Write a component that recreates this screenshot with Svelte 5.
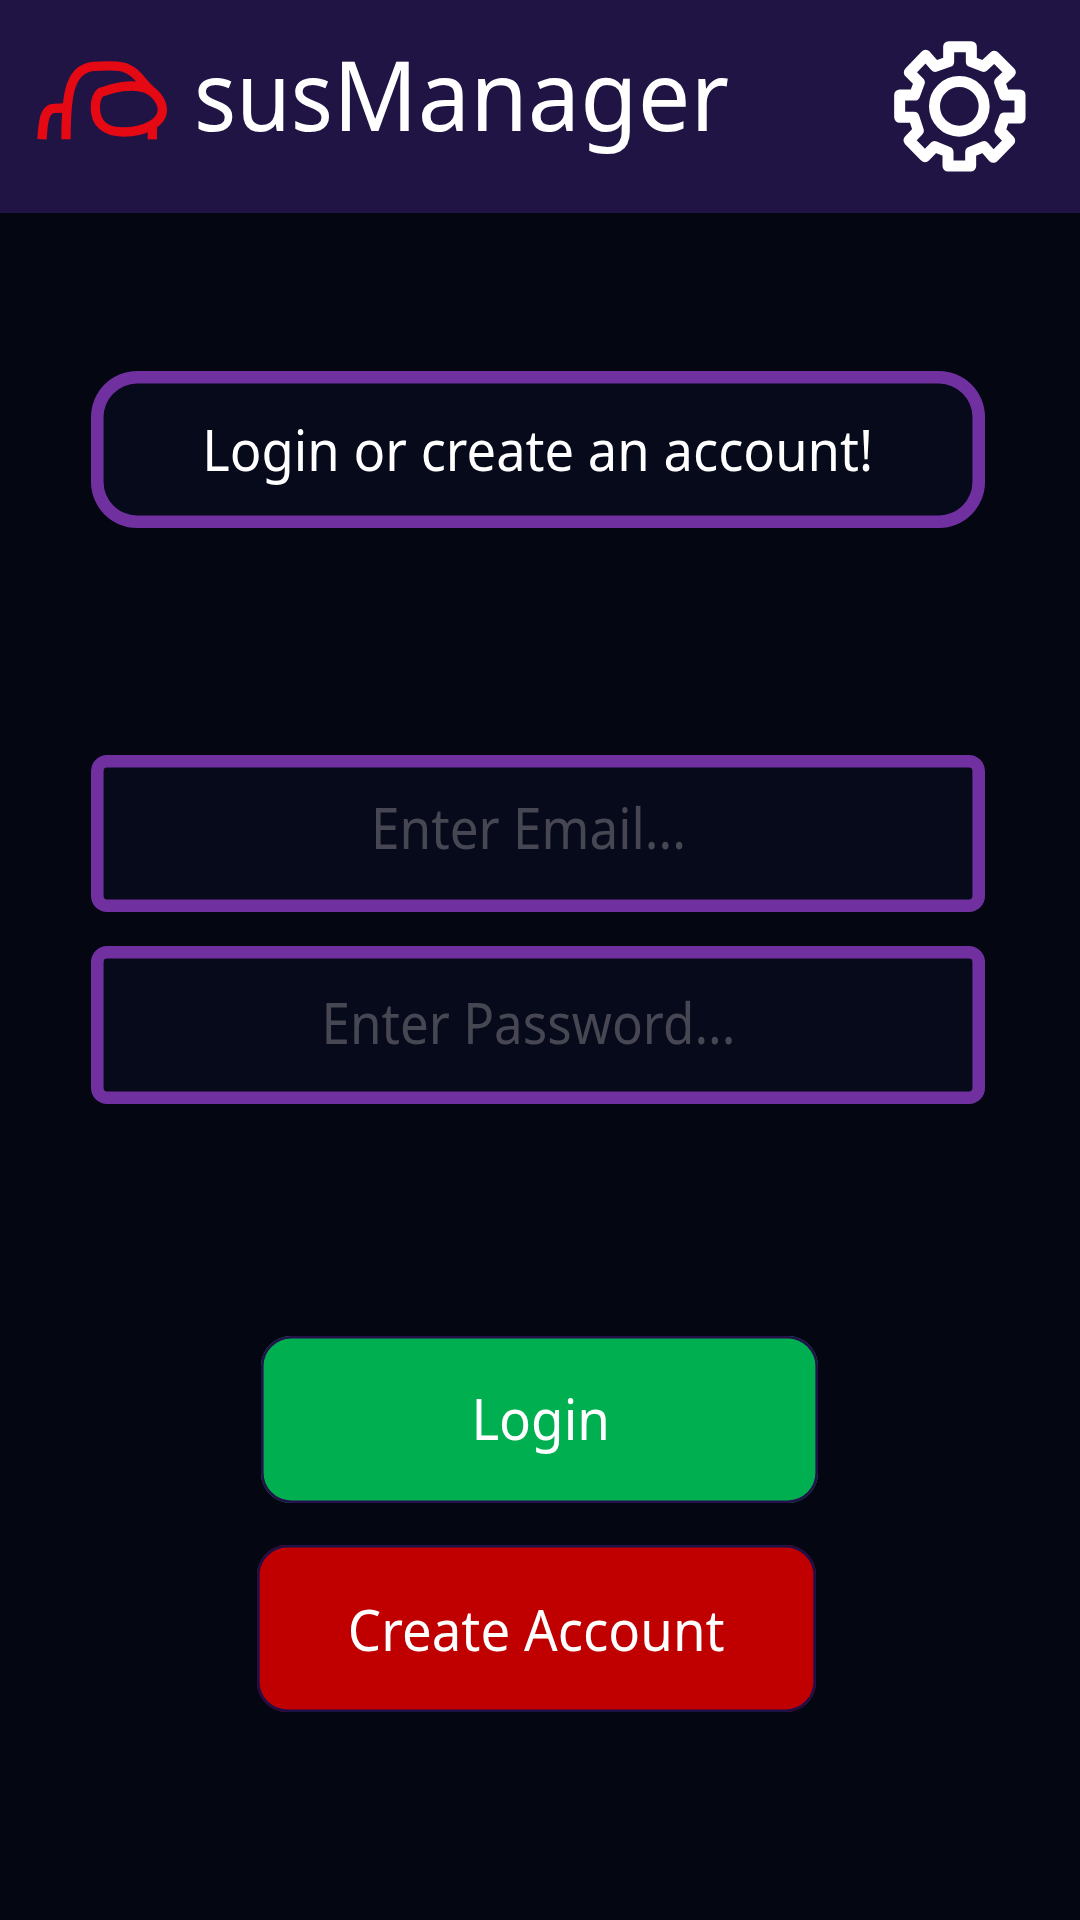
<script>
  const fields = [
    { text: 'Enter Email...', x: 280, y: 94, length: 315 },
    { text: 'Enter Password...', x: 230.5, y: 97.7, length: 414 }
  ];
</script>

{#snippet label(text, x, y, length)}
  <svg class="label"><text {x} {y} textLength={length} lengthAdjust="spacingAndGlyphs">{text}</text></svg>
{/snippet}

<div class="screen">
  <header>
    <svg class="logo" viewBox="0 0 540 360" aria-hidden="true">
      <path d="M138 298C138 252 140 192 149 153C160 106 183 82 222 79C252 77 284 76 308 81C352 92 366 132 393 151" />
      <path d="M66 298C69 250 72 205 103 205L134 204" />
      <path d="M242 157C278 143 335 130 375 144C407 155 427 186 427 210C427 247 375 276 310 276C255 276 226 249 226 203C226 181 232 165 242 157Z" />
      <path d="M397 298V262" />
    </svg>
    <h1>
      <svg class="label">
        <text x="0" y="131" textLength="139" lengthAdjust="spacingAndGlyphs">sus</text>
        <text x="139" y="131" textLength="396" lengthAdjust="spacingAndGlyphs">Manager</text>
      </svg>
    </h1>
    <svg class="gear" viewBox="0 0 480 480" role="img" aria-label="Settings">
      <path d="M206 95V50H274V95L311 109L343 79L391 127L359 157L373 195H420V264H373L360 302L389 332L340 382L312 350L272 366V408H204V366L164 350L135 380L87 331L115 302L102 262H59V195H104L118 157L88 127L137 76L166 109Z" />
      <circle cx="238" cy="229" r="74.5" />
    </svg>
  </header>

  <main>
    <section class="box prompt">{@render label('Login or create an account!', 111.2, 99.7, 671)}</section>
    <form>
      {#each fields as f}
        <div class="box field">{@render label(f.text, f.x, f.y, f.length)}</div>
      {/each}
    </form>
    <button class="login">{@render label('Login', 210.4, 104.2, 138.6)}</button>
    <button class="create">{@render label('Create Account', 90.8, 105.8, 376.8)}</button>
  </main>
</div>

<style>
  :global(body) {
    margin: 0;
    background: #040611;
  }
  .screen {
    width: 1080px;
    height: 1920px;
    overflow: hidden;
    background: #040611;
    font-family: 'Noto Sans', 'Open Sans', sans-serif;
    font-size: 56.5px;
  }
  header {
    display: flex;
    height: 212.7px;
    background: #201445;
  }
  .logo {
    width: 180px;
    height: 120px;
    margin: 40px -6px 0 20px;
    fill: none;
    stroke: #e50914;
    stroke-width: 28;
  }
  h1 {
    width: 686px;
    height: 100%;
    margin: 0;
    font-size: 97.7px;
    font-weight: 400;
  }
  .gear {
    width: 160px;
    height: 160px;
    margin-top: 30px;
    fill: none;
    stroke: #fff;
    stroke-width: 33;
    stroke-linejoin: round;
  }
  .label {
    display: block;
    width: 100%;
    height: 100%;
    overflow: visible;
    fill: #fff;
  }
  main {
    display: flex;
    flex-direction: column;
    padding: 158px 94.6px 0 91px;
  }
  .box {
    box-sizing: border-box;
    height: 157.2px;
    background: #060a1a;
    box-shadow: inset 0 0 0 12.6px #7130a0;
  }
  .prompt {
    border-radius: 46px;
  }
  form {
    display: flex;
    flex-direction: column;
    gap: 34px;
    margin: 227.3px 0 232.5px;
  }
  .field {
    border-radius: 16px;
  }
  .field .label,
  .field :global(.label) {
    fill: #464753;
  }
  button {
    box-sizing: border-box;
    height: 167px;
    padding: 0;
    border: 0;
    border-radius: 30px;
    font: inherit;
  }
  .login {
    width: 557px;
    margin-left: 170.3px;
    background: #00b050;
    box-shadow: inset 0 0 0 2.6px #24104a;
  }
  .create {
    width: 559px;
    margin: 41.6px 0 0 165.5px;
    background: #c00000;
    box-shadow: inset 0 0 0 2.6px #1b1048;
  }
</style>
